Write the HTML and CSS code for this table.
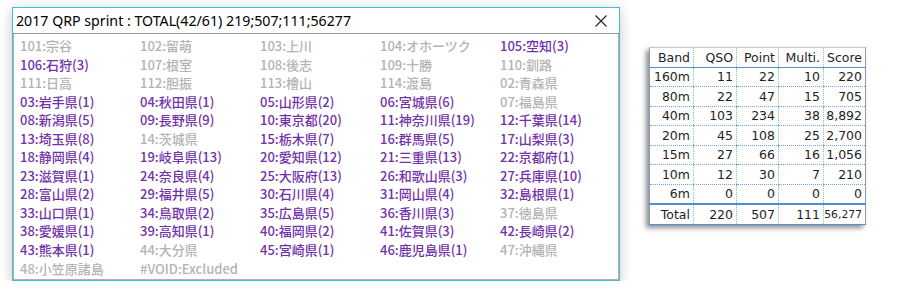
FILE: index.html
```html
<!DOCTYPE html>
<html lang="ja">
<head>
<meta charset="utf-8">
<title>2017 QRP sprint</title>
<link rel="stylesheet" href="styles.css">
</head>
<body>
<div class="page">
  <div class="window">
    <div class="titlebar">
      <span class="title">2017 QRP sprint : TOTAL(42/61) 219;507;111;56277</span>
      <svg class="close" width="12" height="12" viewBox="0 0 12 12"><path d="M0.5 0.5 L11.5 11.5 M11.5 0.5 L0.5 11.5" stroke="#222" stroke-width="1.1" fill="none"/></svg>
    </div>
    <div class="listbox">
      <span class="g">101:宗谷</span><span class="g">102:留萌</span><span class="g">103:上川</span><span class="g">104:オホーツク</span><span class="p">105:空知(3)</span>
      <span class="p">106:石狩(3)</span><span class="g">107:根室</span><span class="g">108:後志</span><span class="g">109:十勝</span><span class="g">110:釧路</span>
      <span class="g">111:日高</span><span class="g">112:胆振</span><span class="g">113:檜山</span><span class="g">114:渡島</span><span class="g">02:青森県</span>
      <span class="p">03:岩手県(1)</span><span class="p">04:秋田県(1)</span><span class="p">05:山形県(2)</span><span class="p">06:宮城県(6)</span><span class="g">07:福島県</span>
      <span class="p">08:新潟県(5)</span><span class="p">09:長野県(9)</span><span class="p">10:東京都(20)</span><span class="p">11:神奈川県(19)</span><span class="p">12:千葉県(14)</span>
      <span class="p">13:埼玉県(8)</span><span class="g">14:茨城県</span><span class="p">15:栃木県(7)</span><span class="p">16:群馬県(5)</span><span class="p">17:山梨県(3)</span>
      <span class="p">18:静岡県(4)</span><span class="p">19:岐阜県(13)</span><span class="p">20:愛知県(12)</span><span class="p">21:三重県(13)</span><span class="p">22:京都府(1)</span>
      <span class="p">23:滋賀県(1)</span><span class="p">24:奈良県(4)</span><span class="p">25:大阪府(13)</span><span class="p">26:和歌山県(3)</span><span class="p">27:兵庫県(10)</span>
      <span class="p">28:富山県(2)</span><span class="p">29:福井県(5)</span><span class="p">30:石川県(4)</span><span class="p">31:岡山県(4)</span><span class="p">32:島根県(1)</span>
      <span class="p">33:山口県(1)</span><span class="p">34:鳥取県(2)</span><span class="p">35:広島県(5)</span><span class="p">36:香川県(3)</span><span class="g">37:徳島県</span>
      <span class="p">38:愛媛県(1)</span><span class="p">39:高知県(1)</span><span class="p">40:福岡県(2)</span><span class="p">41:佐賀県(3)</span><span class="p">42:長崎県(2)</span>
      <span class="p">43:熊本県(1)</span><span class="g">44:大分県</span><span class="p">45:宮崎県(1)</span><span class="p">46:鹿児島県(1)</span><span class="g">47:沖縄県</span>
      <span class="g">48:小笠原諸島</span><span class="g">#VOID:Excluded</span>
    </div>
  </div>

  <table class="score">
    <thead>
      <tr><th>Band</th><th>QSO</th><th>Point</th><th>Multi.</th><th>Score</th></tr>
    </thead>
    <tbody>
      <tr><td>160m</td><td>11</td><td>22</td><td>10</td><td>220</td></tr>
      <tr><td>80m</td><td>22</td><td>47</td><td>15</td><td>705</td></tr>
      <tr><td>40m</td><td>103</td><td>234</td><td>38</td><td>8,892</td></tr>
      <tr><td>20m</td><td>45</td><td>108</td><td>25</td><td>2,700</td></tr>
      <tr><td>15m</td><td>27</td><td>66</td><td>16</td><td>1,056</td></tr>
      <tr><td>10m</td><td>12</td><td>30</td><td>7</td><td>210</td></tr>
      <tr><td>6m</td><td>0</td><td>0</td><td>0</td><td>0</td></tr>
    </tbody>
    <tfoot>
      <tr><td>Total</td><td>220</td><td>507</td><td>111</td><td class="small">56,277</td></tr>
    </tfoot>
  </table>
</div>
</body>
</html>
```

FILE: styles.css
```css
html, body {
  margin: 0;
  padding: 0;
  background: #ffffff;
}

.page {
  display: flex;
  align-items: flex-start;
  padding: 7px 0 0 12px;
}

.window {
  width: 606px;
  height: 272px;
  border: 1px solid #3cc3cb;
  background: #ffffff;
  box-shadow: 0 3px 12px rgba(0, 0, 0, 0.22);
  display: flex;
  flex-direction: column;
}

.titlebar {
  height: 25px;
  display: flex;
  align-items: center;
  justify-content: space-between;
  padding: 0 12px 0 3px;
  border-bottom: 1px solid #9c9c9c;
}

.title {
  font-family: "Noto Sans", "Liberation Sans", sans-serif;
  font-size: 14.2px;
  color: #000;
  white-space: nowrap;
}

.close {
  display: block;
  margin-top: 1px;
}

.listbox {
  flex: 1;
  border-left: 1px solid #c4a9a9;
  border-right: 1px solid #c4a9a9;
  border-bottom: 1px solid #c4a9a9;
  padding: 3px 0 0 6px;
  display: grid;
  grid-template-columns: repeat(5, 120px);
  grid-auto-rows: 18.55px;
  align-content: start;
  font-family: "Noto Sans CJK JP", "Noto Sans", sans-serif;
  font-size: 13px;
  font-weight: 500;
  line-height: 18.55px;
  white-space: nowrap;
}

.g { color: #b3b3b3; }
.p { color: #7232aa; }

.score {
  margin: 40px 0 0 29px;
  border-collapse: collapse;
  background: #ffffff;
  font-family: "DejaVu Sans", Verdana, sans-serif;
  font-size: 12.5px;
  color: #1e1e1e;
  border-top: 1px solid #c9c9c9;
  border-left: 1px solid #8e9cb0;
  border-right: 1px solid #8e9cb0;
  border-bottom: 1px solid #4f8fd8;
  box-shadow: -3px 3px 5px rgba(0, 0, 0, 0.45);
}

.score th,
.score td {
  height: 18.5px;
  padding: 0 3px 0 0;
  text-align: right;
  font-weight: normal;
  border-left: 1px dotted #7fcf95;
  border-bottom: 1px dotted #6fa6e6;
  white-space: nowrap;
}

.score th:first-child,
.score td:first-child {
  border-left: none;
  width: 40px;
}

.score th:nth-child(2) { width: 39px; }
.score th:nth-child(3) { width: 38px; }
.score th:nth-child(4) { width: 41px; }
.score th:nth-child(5) { width: 38px; }

.score thead th {
  border-bottom: 1px solid #4f8fd8;
}

.score tfoot td {
  border-top: 2px solid #4f8fd8;
  border-bottom: 1px solid #4f8fd8;
}

.score td.small {
  font-size: 10.8px;
}
```
